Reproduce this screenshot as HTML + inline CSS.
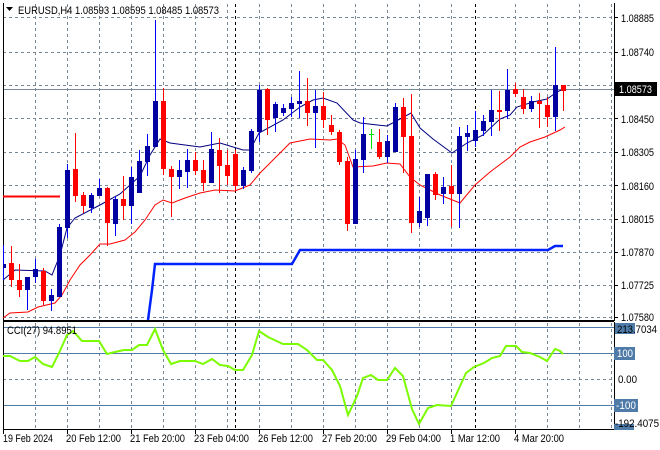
<!DOCTYPE html>
<html><head><meta charset="utf-8"><style>
html,body{margin:0;padding:0;background:#fff;}
svg{display:block;font-family:"Liberation Sans",sans-serif;font-size:11px;}
</style></head><body>
<svg width="660" height="450" viewBox="0 0 660 450" xmlns="http://www.w3.org/2000/svg" shape-rendering="crispEdges">
<rect width="660" height="450" fill="#fff"/>
<g stroke="#778899" stroke-dasharray="3,3" stroke-width="1">
<path d="M35.5 4V320M67.5 4V320M99.5 4V320M131.5 4V320M163.5 4V320M195.5 4V320M227.5 4V320M259.5 4V320M291.5 4V320M323.5 4V320M355.5 4V320M387.5 4V320M419.5 4V320M451.5 4V320M515.5 4V320M547.5 4V320M579.5 4V320M611.5 4V320"/>
<path d="M3 17.5H614M3 52.5H614M3 85.5H614M3 118.5H614M3 152.5H614M3 185.5H614M3 219.5H614M3 252.5H614M3 285.5H614M3 317.5H614"/>
<path d="M35.5 323V429M67.5 323V429M99.5 323V429M131.5 323V429M163.5 323V429M195.5 323V429M227.5 323V429M259.5 323V429M291.5 323V429M323.5 323V429M355.5 323V429M387.5 323V429M419.5 323V429M451.5 323V429M515.5 323V429M547.5 323V429M579.5 323V429M611.5 323V429"/>
<path d="M3 379.5H614"/>
</g>
<g stroke="#000" stroke-dasharray="3,3"><path d="M235.5 4V320M475.5 4V320M235.5 323V429M475.5 323V429"/></g>
<g stroke="#4f7ba8"><path d="M3 327.5H614M3 353.5H614M3 405.5H614"/></g>
<path d="M3 89.5H614" stroke="#778899"/>
<g stroke="#000" fill="none"><path d="M3.5 3V320.5H614.5V3M3.5 322V429.5H614.5V322M3 321.5H614"/></g>
<path d="M3 196.5H60" stroke="#ff0000" stroke-width="2"/>
<polyline points="148,320 152,290 155,264 292,264 300,250 548,250 555,246 563,246" fill="none" stroke="#0022ff" stroke-width="2.5" shape-rendering="auto"/>
<polyline points="3,280 15,270 45,271 52,275 60,255 67,228 75,218 100,205 120,194 140,176 150,155 160,139 170,143 200,147 220,143 243,150 250,150 259,133 283,120 300,107 313,100 323,98 337,103 353,120 360,123 387,126 400,119 411,113 420,128 433,139 452,153 467,143 483,135 500,119 510,115 517,107 533,102 547,99 557,92 563,89" fill="none" stroke="#000080" stroke-width="1" shape-rendering="auto"/>
<polyline points="3,318 10,313 28,312 38,307 55,303 62,295 70,280 80,265 90,255 100,244 110,244 125,240 135,232 145,220 155,205 163,200 172,203 185,198 200,193 215,190 235,191 250,185 260,173 275,158 290,143 310,139 330,140 337,139 345,145 353,167 373,166 387,163 400,164 410,177 420,185 440,195 455,201 460,203 475,185 490,172 510,157 520,147 530,142 545,137 560,130 565,127" fill="none" stroke="#ff0000" stroke-width="1" shape-rendering="auto"/>
<g stroke-width="1">
<g stroke="#0000ff" fill="#0000a0">
<path d="M3.5 245V280M27.5 277V310M35.5 259V283M51.5 289V311M59.5 224V297M67.5 164V238M91.5 193V213M99.5 179V196M115.5 196V236M131.5 167V224M139.5 150V193M147.5 134V176M155.5 20V147M179.5 160V189M187.5 149V188M211.5 132V183M243.5 167V189M251.5 129V173M259.5 85V142M275.5 102V132M283.5 104V116M291.5 97V117M299.5 71V118M315.5 90V148M355.5 150V224M363.5 117V173M387.5 135V163M395.5 103V152M419.5 197V227M427.5 174V226M443.5 177V204M459.5 127V228M467.5 125V151M475.5 111V147M483.5 115V136M491.5 90V136M507.5 69V119M531.5 96V112M555.5 47V131"/>
<g stroke="none">
<rect x="3" y="264" width="3" height="4"/><rect x="25" y="277" width="5" height="13"/><rect x="33" y="269" width="5" height="8"/><rect x="49" y="295" width="5" height="6"/><rect x="57" y="227" width="5" height="70"/><rect x="65" y="170" width="5" height="58"/><rect x="89" y="195" width="5" height="13"/><rect x="97" y="188" width="5" height="8"/><rect x="113" y="199" width="5" height="25"/><rect x="129" y="177" width="5" height="29"/><rect x="137" y="161" width="5" height="32"/><rect x="145" y="146" width="5" height="16"/><rect x="153" y="101" width="5" height="46"/><rect x="177" y="170" width="5" height="7"/><rect x="185" y="160" width="5" height="12"/><rect x="209" y="149" width="5" height="34"/><rect x="241" y="170" width="5" height="16"/><rect x="249" y="131" width="5" height="40"/><rect x="257" y="90" width="5" height="42"/><rect x="273" y="104" width="5" height="14"/><rect x="281" y="108" width="5" height="5"/><rect x="289" y="103" width="5" height="6"/><rect x="297" y="101" width="5" height="3"/><rect x="313" y="106" width="5" height="7"/><rect x="353" y="159" width="5" height="65"/><rect x="361" y="134" width="5" height="26"/><rect x="385" y="141" width="5" height="16"/><rect x="393" y="107" width="5" height="45"/><rect x="417" y="211" width="5" height="12"/><rect x="425" y="174" width="5" height="44"/><rect x="441" y="187" width="5" height="7"/><rect x="457" y="136" width="5" height="58"/><rect x="465" y="133" width="5" height="4"/><rect x="473" y="130" width="5" height="11"/><rect x="481" y="121" width="5" height="10"/><rect x="489" y="110" width="5" height="12"/><rect x="505" y="90" width="5" height="21"/><rect x="529" y="101" width="5" height="8"/><rect x="553" y="85" width="5" height="32"/>
</g></g>
<g stroke="#ff0000" fill="#ff0000">
<path d="M11.5 246V287M19.5 264V297M43.5 268V305M75.5 133V202M83.5 192V213M107.5 187V246M123.5 176V220M163.5 88V175M171.5 166V217M195.5 152V175M203.5 160V191M219.5 138V193M227.5 150V185M235.5 150V191M267.5 88V135M307.5 78V126M323.5 92V128M331.5 115V135M339.5 130V165M347.5 157V231M379.5 129V159M403.5 98V173M411.5 94V233M435.5 172V200M451.5 165V227M499.5 91V131M515.5 83V97M523.5 89V114M539.5 93V128M547.5 97V127M563.5 85V111"/>
<g stroke="none">
<rect x="9" y="263" width="5" height="17"/><rect x="17" y="280" width="5" height="10"/><rect x="41" y="271" width="5" height="30"/><rect x="73" y="169" width="5" height="27"/><rect x="81" y="195" width="5" height="11"/><rect x="105" y="188" width="5" height="35"/><rect x="121" y="199" width="5" height="7"/><rect x="161" y="101" width="5" height="68"/><rect x="169" y="169" width="5" height="8"/><rect x="193" y="160" width="5" height="11"/><rect x="201" y="170" width="5" height="13"/><rect x="217" y="150" width="5" height="16"/><rect x="225" y="165" width="5" height="11"/><rect x="233" y="154" width="5" height="32"/><rect x="265" y="89" width="5" height="31"/><rect x="305" y="101" width="5" height="12"/><rect x="321" y="106" width="5" height="14"/><rect x="329" y="125" width="5" height="7"/><rect x="337" y="132" width="5" height="30"/><rect x="345" y="161" width="5" height="63"/><rect x="377" y="142" width="5" height="15"/><rect x="401" y="107" width="5" height="30"/><rect x="409" y="136" width="5" height="87"/><rect x="433" y="174" width="5" height="21"/><rect x="449" y="186" width="5" height="8"/><rect x="497" y="110" width="5" height="2"/><rect x="513" y="89" width="5" height="5"/><rect x="521" y="97" width="5" height="12"/><rect x="537" y="101" width="5" height="3"/><rect x="545" y="105" width="5" height="12"/><rect x="561" y="85" width="5" height="6"/>
</g></g>
<path d="M371.5 129V149M369 134.5H374" stroke="#00e000"/>
</g>
<polyline points="3,356 10,356 20,361 28,361 35,357 43,364 52,367 59,353 67,335 73,331 82,341 99,341 107,354 115,352 124,350 132,350 139,345 147,345 155,329 163,350 171,364 180,361 195,361 203,364 212,359 220,365 228,366 235,370 243,370 252,355 259,331 268,337 283,344 298,344 307,350 317,360 323,360 332,370 340,386 348,415 357,396 363,378 371,375 378,380 387,380 395,368 403,376 412,409 419,424 428,408 437,405 451,406 466,373 474,367 484,363 492,358 500,356 506,346 516,346 522,352 530,353 540,357 547,361 555,349 560,351 563,354" fill="none" stroke="#7cfc00" stroke-width="2" shape-rendering="auto"/>
<path d="M6 7H13L9.5 11Z" fill="#000" shape-rendering="auto"/>
<text x="18" y="14" fill="#000" textLength="201" lengthAdjust="spacingAndGlyphs">EURUSD,H4  1.08593 1.08595 1.08485 1.08573</text>
<text x="7" y="334" fill="#000" textLength="70" lengthAdjust="spacingAndGlyphs">CCI(27) 94.8951</text>
<g fill="#000">
<path d="M614 17.5h4M614 52.5h4M614 85.5h4M614 118.5h4M614 152.5h4M614 185.5h4M614 219.5h4M614 252.5h4M614 285.5h4M614 317.5h4" stroke="#000"/>
<text x="621" y="22" textLength="33" lengthAdjust="spacingAndGlyphs">1.08885</text>
<text x="621" y="56" textLength="33" lengthAdjust="spacingAndGlyphs">1.08740</text>
<text x="621" y="123" textLength="33" lengthAdjust="spacingAndGlyphs">1.08450</text>
<text x="621" y="156" textLength="33" lengthAdjust="spacingAndGlyphs">1.08305</text>
<text x="621" y="190" textLength="33" lengthAdjust="spacingAndGlyphs">1.08160</text>
<text x="621" y="223" textLength="33" lengthAdjust="spacingAndGlyphs">1.08015</text>
<text x="621" y="256" textLength="33" lengthAdjust="spacingAndGlyphs">1.07870</text>
<text x="621" y="289" textLength="33" lengthAdjust="spacingAndGlyphs">1.07725</text>
<text x="621" y="321" textLength="33" lengthAdjust="spacingAndGlyphs">1.07580</text>
</g>
<rect x="614" y="82" width="43" height="14" fill="#000"/>
<text x="619" y="93" fill="#fff" textLength="33" lengthAdjust="spacingAndGlyphs">1.08573</text>
<rect x="615" y="323" width="20" height="11" fill="#4f7ba8"/>
<text x="617" y="333" fill="#000" textLength="40" lengthAdjust="spacingAndGlyphs">213.7034</text>
<rect x="614" y="347" width="21" height="13" fill="#4f7ba8"/>
<text x="617" y="357" fill="#fff" textLength="16" lengthAdjust="spacingAndGlyphs">100</text>
<text x="618" y="383" fill="#000" textLength="19" lengthAdjust="spacingAndGlyphs">0.00</text>
<rect x="614" y="399" width="24" height="13" fill="#4f7ba8"/>
<text x="616" y="409" fill="#fff" textLength="20" lengthAdjust="spacingAndGlyphs">-100</text>
<rect x="614" y="424" width="20" height="6" fill="#4f7ba8"/>
<text x="615" y="427" fill="#000" textLength="44" lengthAdjust="spacingAndGlyphs">-192.4075</text>
<g stroke="#000"><path d="M3.5 430v4M67.5 430v4M131.5 430v4M195.5 430v4M259.5 430v4M323.5 430v4M387.5 430v4M451.5 430v4M515.5 430v4"/></g>
<g fill="#000">
<text x="3" y="442" textLength="50" lengthAdjust="spacingAndGlyphs">19 Feb 2024</text>
<text x="66" y="442" textLength="55" lengthAdjust="spacingAndGlyphs">20 Feb 12:00</text>
<text x="130" y="442" textLength="55" lengthAdjust="spacingAndGlyphs">21 Feb 20:00</text>
<text x="194" y="442" textLength="55" lengthAdjust="spacingAndGlyphs">23 Feb 04:00</text>
<text x="258" y="442" textLength="55" lengthAdjust="spacingAndGlyphs">26 Feb 12:00</text>
<text x="322" y="442" textLength="55" lengthAdjust="spacingAndGlyphs">27 Feb 20:00</text>
<text x="386" y="442" textLength="55" lengthAdjust="spacingAndGlyphs">29 Feb 04:00</text>
<text x="450" y="442" textLength="50" lengthAdjust="spacingAndGlyphs">1 Mar 12:00</text>
<text x="514" y="442" textLength="50" lengthAdjust="spacingAndGlyphs">4 Mar 20:00</text>
</g>
</svg>
</body></html>
